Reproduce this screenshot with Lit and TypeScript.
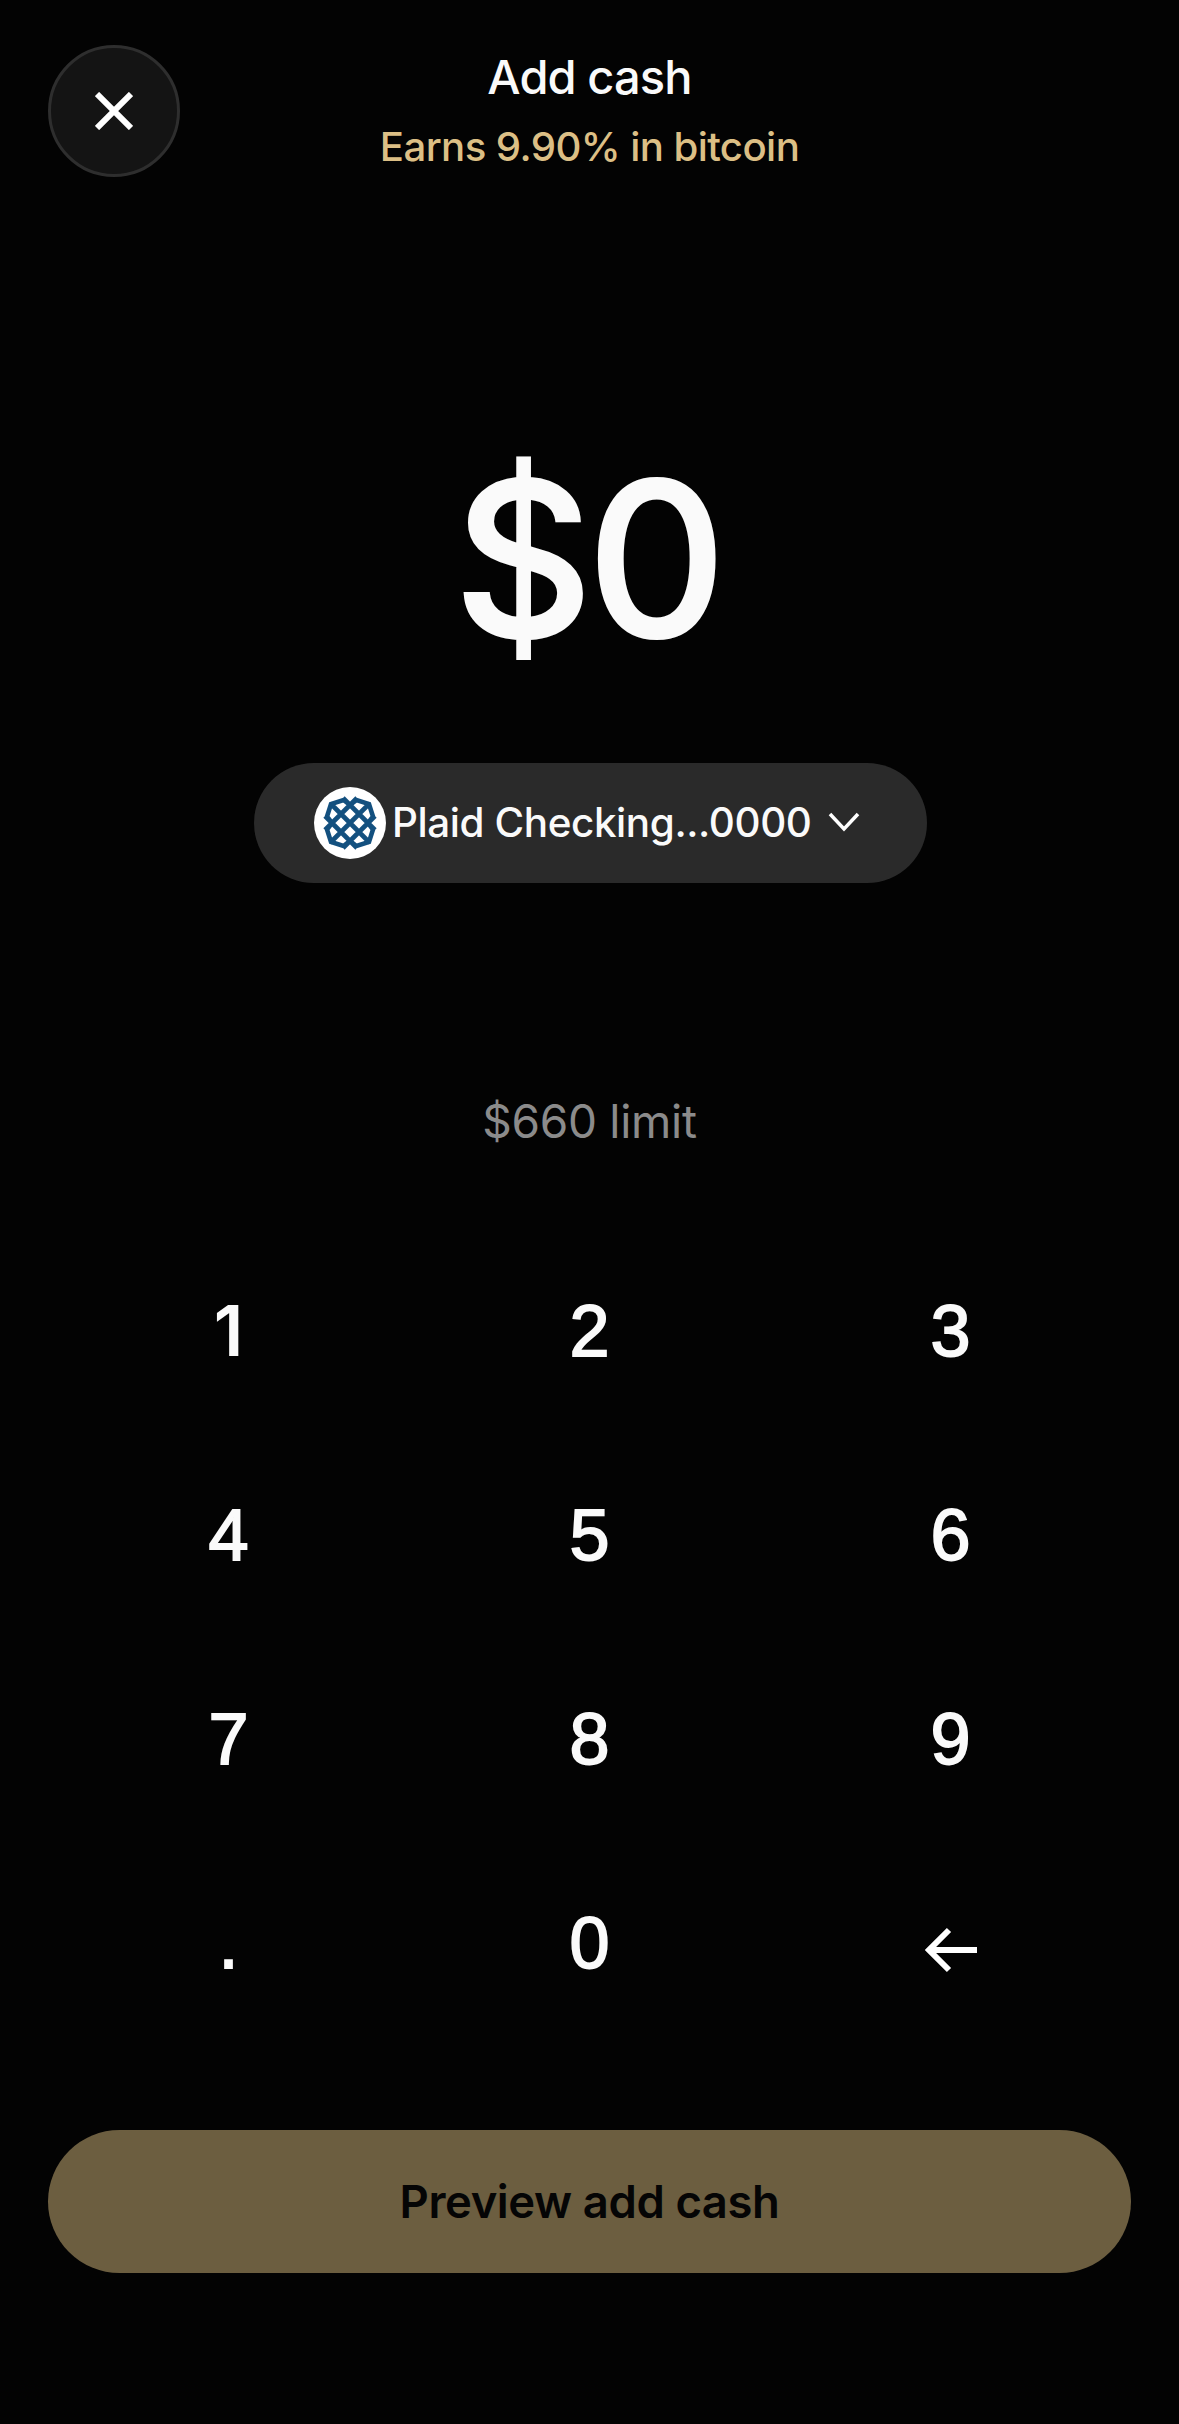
import { LitElement, html, css } from "lit";
import { customElement } from "lit/decorators.js";
import { classMap } from "lit/directives/class-map.js";

const KEYS = ["1", "2", "3", "4", "5", "6", "7", "8", "9", ".", "0"];

@customElement("app-root")
export class AppRoot extends LitElement {
  static styles = css`
    :host {
      display: block;
      width: 1179px;
      height: 2424px;
      background: #030303;
      color: #fafafa;
      font-family: Inter, "Liberation Sans", sans-serif;
      overflow: hidden;
    }
    .page {
      display: flex;
      flex-direction: column;
      align-items: stretch;
      height: 2424px;
      padding: 45px 48px 0;
      box-sizing: border-box;
    }
    .header {
      display: grid;
      grid-template-columns: 132px 1fr 132px;
      height: 132px;
    }
    .close {
      width: 132px;
      height: 132px;
      box-sizing: border-box;
      border-radius: 50%;
      background: #141414;
      border: 3px solid #2e2e2e;
      display: flex;
      align-items: center;
      justify-content: center;
    }
    .titles {
      display: flex;
      flex-direction: column;
      align-items: center;
      gap: 18px;
    }
    .title {
      font-size: 47px;
      line-height: 54px;
      font-weight: 500;
      margin-top: 5px;
      letter-spacing: -0.9px;
    }
    .sub {
      font-size: 40.2px;
      line-height: 48px;
      font-weight: 500;
      color: #dcbf85;
      letter-spacing: -0.6px;
      margin-top: 1px;
    }
    .amount {
      margin-top: 252px;
      padding-right: 5px;
      text-align: center;
      font-size: 216px;
      line-height: 260px;
      font-weight: 500;
      letter-spacing: -6px;
      -webkit-text-stroke: 2px #fafafa;
    }
    .pill-row {
      display: flex;
      justify-content: center;
      margin-top: 74px;
    }
    .pill {
      width: 673px;
      height: 120px;
      border-radius: 60px;
      background: #2a2a2a;
      display: flex;
      align-items: center;
      padding-left: 60px;
      box-sizing: border-box;
      margin-left: 2px;
    }
    .logo {
      width: 72px;
      height: 72px;
      flex: none;
    }
    .bank {
      margin-left: 6px;
      font-size: 40.4px;
      font-weight: 500;
      letter-spacing: -0.4px;
      white-space: nowrap;
      margin-top: -2px;
    }
    .chev {
      margin-left: 16px;
      margin-top: -3px;
      flex: none;
    }
    .limit {
      margin-top: 210px;
      text-align: center;
      font-size: 46px;
      line-height: 56px;
      color: #8b8b8b;
      letter-spacing: -0.3px;
    }
    .keys {
      display: grid;
      grid-template-columns: repeat(3, 361px);
      grid-auto-rows: 204px;
      margin-top: 80px;
    }
    .key {
      display: flex;
      align-items: center;
      justify-content: center;
      font-family: "Liberation Sans", Arial, sans-serif;
      font-size: 72px;
      font-weight: 400;
      line-height: 1;
      -webkit-text-stroke: 1.8px #fafafa;
    }
    .key.plain {
      font-family: Inter, "Liberation Sans", sans-serif;
      font-weight: 600;
      font-size: 70px;
      -webkit-text-stroke: 0;
    }
    .key.arrow svg {
      margin-top: 14px;
    }
    .preview {
      margin-top: 85px;
      height: 143px;
      border-radius: 72px;
      background: #6c5e40;
      color: #050505;
      display: flex;
      align-items: center;
      justify-content: center;
      font-size: 45.4px;
      font-weight: 600;
      letter-spacing: -0.4px;
    }
  `;

  private logo() {
    return html`<svg class="logo" viewBox="0 0 72 72" aria-hidden="true">
      <circle cx="36" cy="36" r="36" fill="#fff"></circle>
      <path
        d="M36 18 L29.5 13 L17 17 L13 29.5 L18 36 L13 42.5 L17 55 L29.5 59 L36 54 L42.5 59 L55 55 L59 42.5 L54 36 L59 29.5 L55 17 L42.5 13 Z
           M16 16 L56 56 M29 11 L61 43 M11 29 L43 61 M16 56 L56 16 M43 11 L11 43 M61 29 L29 61"
        fill="none"
        stroke="#13507f"
        stroke-width="4.6"
      ></path>
    </svg>`;
  }

  render() {
    return html`<div class="page">
      <div class="header">
        <div class="close">
          <svg width="38" height="38" viewBox="0 0 38 38" aria-hidden="true">
            <path d="M2 2 L36 36 M36 2 L2 36" stroke="#fff" stroke-width="6" fill="none"></path>
          </svg>
        </div>
        <div class="titles">
          <div class="title">Add cash</div>
          <div class="sub">Earns 9.90% in bitcoin</div>
        </div>
        <div></div>
      </div>
      <div class="amount">$0</div>
      <div class="pill-row">
        <div class="pill">
          ${this.logo()}
          <span class="bank">Plaid Checking...0000</span>
          <svg class="chev" width="32" height="20" viewBox="0 0 32 20" aria-hidden="true">
            <path d="M2 2 L16 17 L30 2" stroke="#fff" stroke-width="3.5" fill="none"></path>
          </svg>
        </div>
      </div>
      <div class="limit">$660 limit</div>
      <div class="keys">
        ${KEYS.map((k) => html`<div class=${classMap({ key: true, plain: k === "1" })}>${k}</div>`)}
        <div class="key arrow">
          <svg width="52" height="46" viewBox="0 0 52 46" aria-hidden="true">
            <path d="M52 23 H4 M24 3 L4 23 L24 43" stroke="#fff" stroke-width="6" fill="none"></path>
          </svg>
        </div>
      </div>
      <div class="preview">Preview add cash</div>
    </div>`;
  }
}
